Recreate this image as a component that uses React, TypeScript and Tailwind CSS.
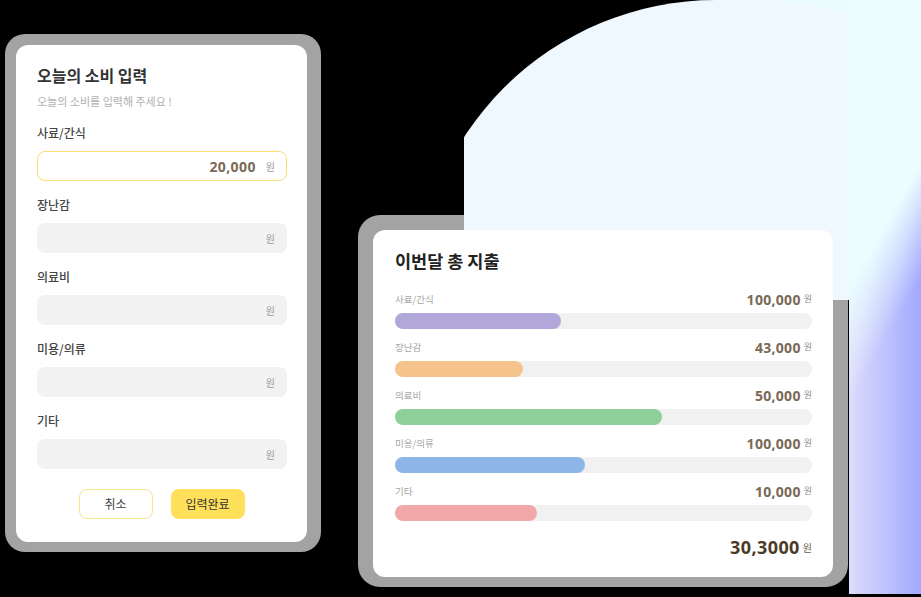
import React from 'react';

type Field = { label: string; value?: string };

const fields: Field[] = [
  { label: '사료/간식', value: '20,000' },
  { label: '장난감' },
  { label: '의료비' },
  { label: '미용/의류' },
  { label: '기타' },
];

type Spend = { label: string; amount: string; pct: number; color: string };

const spends: Spend[] = [
  { label: '사료/간식', amount: '100,000', pct: 39.8, color: 'bg-[#b1a7d9]' },
  { label: '장난감', amount: '43,000', pct: 30.7, color: 'bg-[#f5c38c]' },
  { label: '의료비', amount: '50,000', pct: 64, color: 'bg-[#8fcf9a]' },
  { label: '미용/의류', amount: '100,000', pct: 45.6, color: 'bg-[#8db5e8]' },
  { label: '기타', amount: '10,000', pct: 34, color: 'bg-[#f2a7a9]' },
];

const num = "font-['Open_Sans','Noto_Sans_CJK_KR',sans-serif] font-bold";

const InputCard: React.FC = () => (
  <div className="relative mt-[34px] rounded-[20px] bg-[#a3a3a3] pt-[11px] pl-[11px] pr-[14px] pb-[10px]">
    <div className="relative z-20 w-[291px] rounded-[12px] bg-white px-[21px] pt-[18px] pb-[23px]">
      <h2 className="text-[16px] leading-[24px] font-bold text-[#333]">오늘의 소비 입력</h2>
      <p className="mt-[6px] text-[11px] leading-[16px] text-[#b0b0b0]">오늘의 소비를 입력해 주세요 !</p>

      <div className="mt-[14px] flex flex-col gap-[14px]">
        {fields.map((f) => (
          <div key={f.label}>
            <div className="h-5 text-[12px] leading-5 font-medium text-[#444]">{f.label}</div>
            <div
              className={
                f.value
                  ? 'mt-2 flex h-[30px] w-[250px] items-center justify-end rounded-[8px] border-[1.5px] border-[#f9de72] bg-white pr-[11px]'
                  : 'mt-2 flex h-[30px] w-[250px] items-center justify-end rounded-[8px] bg-[#f2f2f2] pr-[12px]'
              }
            >
              {f.value && (
                <span className={`mr-[10px] text-[14px] tracking-[0.4px] text-[#7b6a55] ${num}`}>{f.value}</span>
              )}
              <span className="text-[10px] text-[#9a9a9a]">원</span>
            </div>
          </div>
        ))}
      </div>

      <div className="mt-5 flex justify-center gap-[18px]">
        <button className="h-[30px] w-[74px] rounded-[8px] border border-[#fbe48c] bg-white text-[12px] text-[#444]">
          취소
        </button>
        <button className="h-[30px] w-[74px] rounded-[8px] bg-[#ffe05a] text-[12px] text-[#333]">
          입력완료
        </button>
      </div>
    </div>
  </div>
);

const TotalCard: React.FC = () => (
  <div className="relative ml-[37px] mt-[215px] rounded-[22px] bg-[#a3a3a3] pt-[15px] pl-[15px] pr-[15px] pb-[10px]">
    <div className="relative z-20 w-[460px] rounded-[12px] bg-white pl-[22px] pr-[21px] pt-[19px] pb-[18px]">
      <h2 className="text-[17.5px] leading-[24px] font-bold text-[#222]">이번달 총 지출</h2>

      <div className="mt-[18px] flex flex-col gap-[10px]">
        {spends.map((s) => (
          <div key={s.label}>
            <div className="flex h-4 items-center justify-between">
              <span className="text-[9.5px] text-[#a6a6a6]">{s.label}</span>
              <span className="flex items-center gap-[3px]">
                <span className={`text-[14px] tracking-[0.3px] text-[#7a6a55] ${num}`}>{s.amount}</span>
                <span className="text-[9px] text-[#8a8a8a]">원</span>
              </span>
            </div>
            <div className="mt-[6px] h-4 w-full rounded-full bg-[#f1f1f1]">
              <div className={`h-4 rounded-full ${s.color}`} style={{ width: `${s.pct}%` }} />
            </div>
          </div>
        ))}
      </div>

      <div className="mt-[14px] flex h-6 items-center justify-end gap-[3px]">
        <span className={`text-[18px] tracking-[0.4px] text-[#4b3a28] ${num}`}>30,3000</span>
        <span className="text-[10px] text-[#6a5a48]">원</span>
      </div>
    </div>
  </div>
);

export default function App() {
  return (
    <div className="relative h-[597px] w-[921px] overflow-hidden bg-black font-['Noto_Sans_CJK_KR',sans-serif]">
      {/* top-right haze behind the blob */}
      <div className="absolute left-[736px] top-0 h-[160px] w-[185px] bg-[#ebfcff]" />
      {/* right backdrop glow */}
      <div className="absolute left-[849px] top-0 h-[594px] w-[72px] bg-[linear-gradient(120deg,#ebfdff_0%,#ebfdff_40%,rgba(235,253,255,0)_56%),linear-gradient(to_right,#dddcfb,#a2a9ff)]" />

      {/* light blob */}
      <div className="absolute left-[464px] top-0 z-10 h-[300px] w-[385px] overflow-hidden">
        <div className="absolute left-[-48px] top-0 h-[600px] w-[640px] rounded-full bg-[#eff8ff]" />
      </div>

      <div className="flex items-start pl-[5px]">
        <InputCard />
        <TotalCard />
      </div>
    </div>
  );
}
